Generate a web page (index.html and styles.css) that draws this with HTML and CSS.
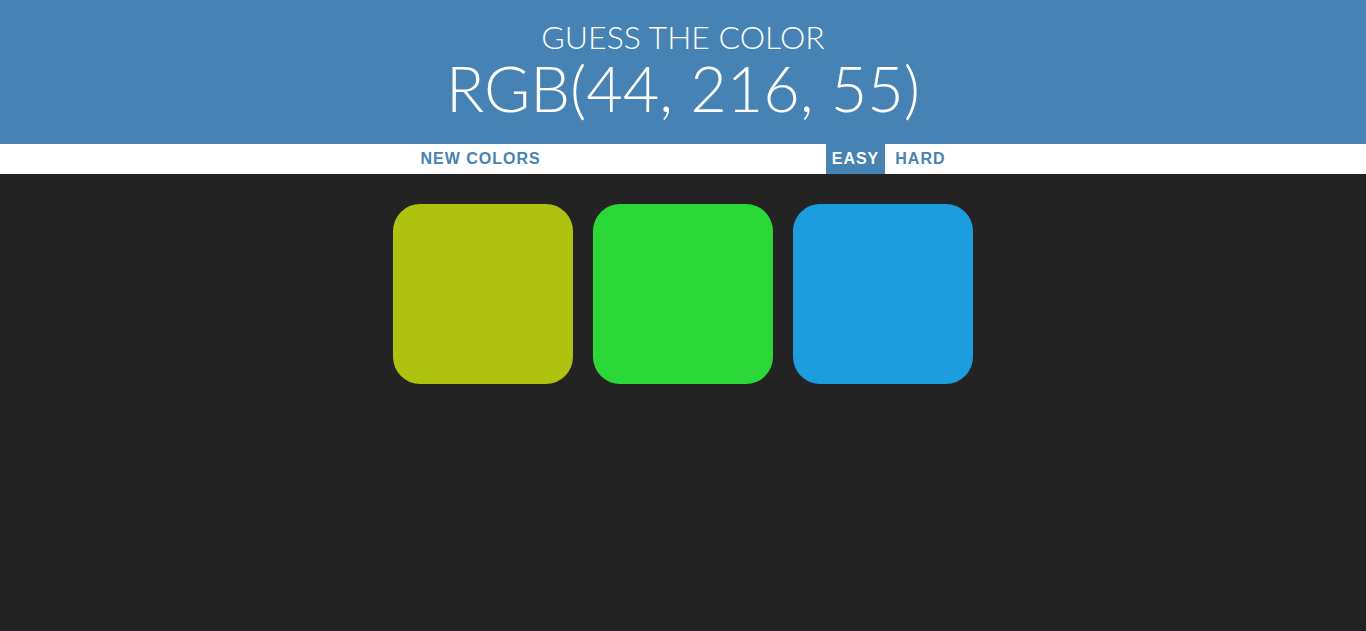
FILE: index.html
```html
<!DOCTYPE html>
<html>
<head>
<meta charset="utf-8">
<title>Color Game</title>
<link rel="stylesheet" href="styles.css">
</head>
<body>
<h1 class="title">
  <span class="title-top">Guess the Color</span>
  <span class="color-display">RGB(44, 216, 55)</span>
</h1>
<div class="stripe">
  <button class="btn reset">New Colors</button>
  <span class="message"></span>
  <button class="btn mode selected">Easy</button>
  <button class="btn mode">Hard</button>
</div>
<div class="container">
  <div class="square" style="background: rgb(174, 194, 15);"></div>
  <div class="square" style="background: rgb(44, 216, 55);"></div>
  <div class="square" style="background: rgb(28, 157, 222);"></div>
</div>
</body>
</html>
```
FILE: styles.css
```css
html, body {
  margin: 0;
  padding: 0;
}
body {
  background: #232323;
  font-family: "Liberation Sans", Arial, sans-serif;
  min-height: 631px;
}
.title {
  margin: 0;
  background: #4682b4;
  color: #ffffff;
  font-family: Lato, "Liberation Sans", sans-serif;
  font-weight: 300;
  text-transform: uppercase;
  text-align: center;
  height: 144px;
  box-sizing: border-box;
  padding-top: 18px;
  display: flex;
  flex-direction: column;
  align-items: center;
}
.title-top {
  font-size: 32px;
  line-height: 38px;
}
.color-display {
  font-size: 63px;
  line-height: 63px;
}
.stripe {
  background: #ffffff;
  height: 30px;
  display: flex;
  justify-content: center;
  align-items: stretch;
  gap: 4px;
}
.btn {
  border: none;
  background: none;
  margin: 0;
  padding: 0 6px;
  font-family: "Liberation Sans", Arial, sans-serif;
  font-size: 16px;
  font-weight: 700;
  letter-spacing: 1px;
  text-transform: uppercase;
  color: #4682b4;
  height: 30px;
  cursor: pointer;
}
.btn.selected {
  background: #4682b4;
  color: #ffffff;
}
.message {
  display: inline-block;
  width: 271px;
}
.container {
  width: 600px;
  margin: 20px auto 0;
  display: flex;
  flex-wrap: wrap;
}
.square {
  width: 180px;
  height: 180px;
  margin: 10px;
  border-radius: 27px;
}
```
